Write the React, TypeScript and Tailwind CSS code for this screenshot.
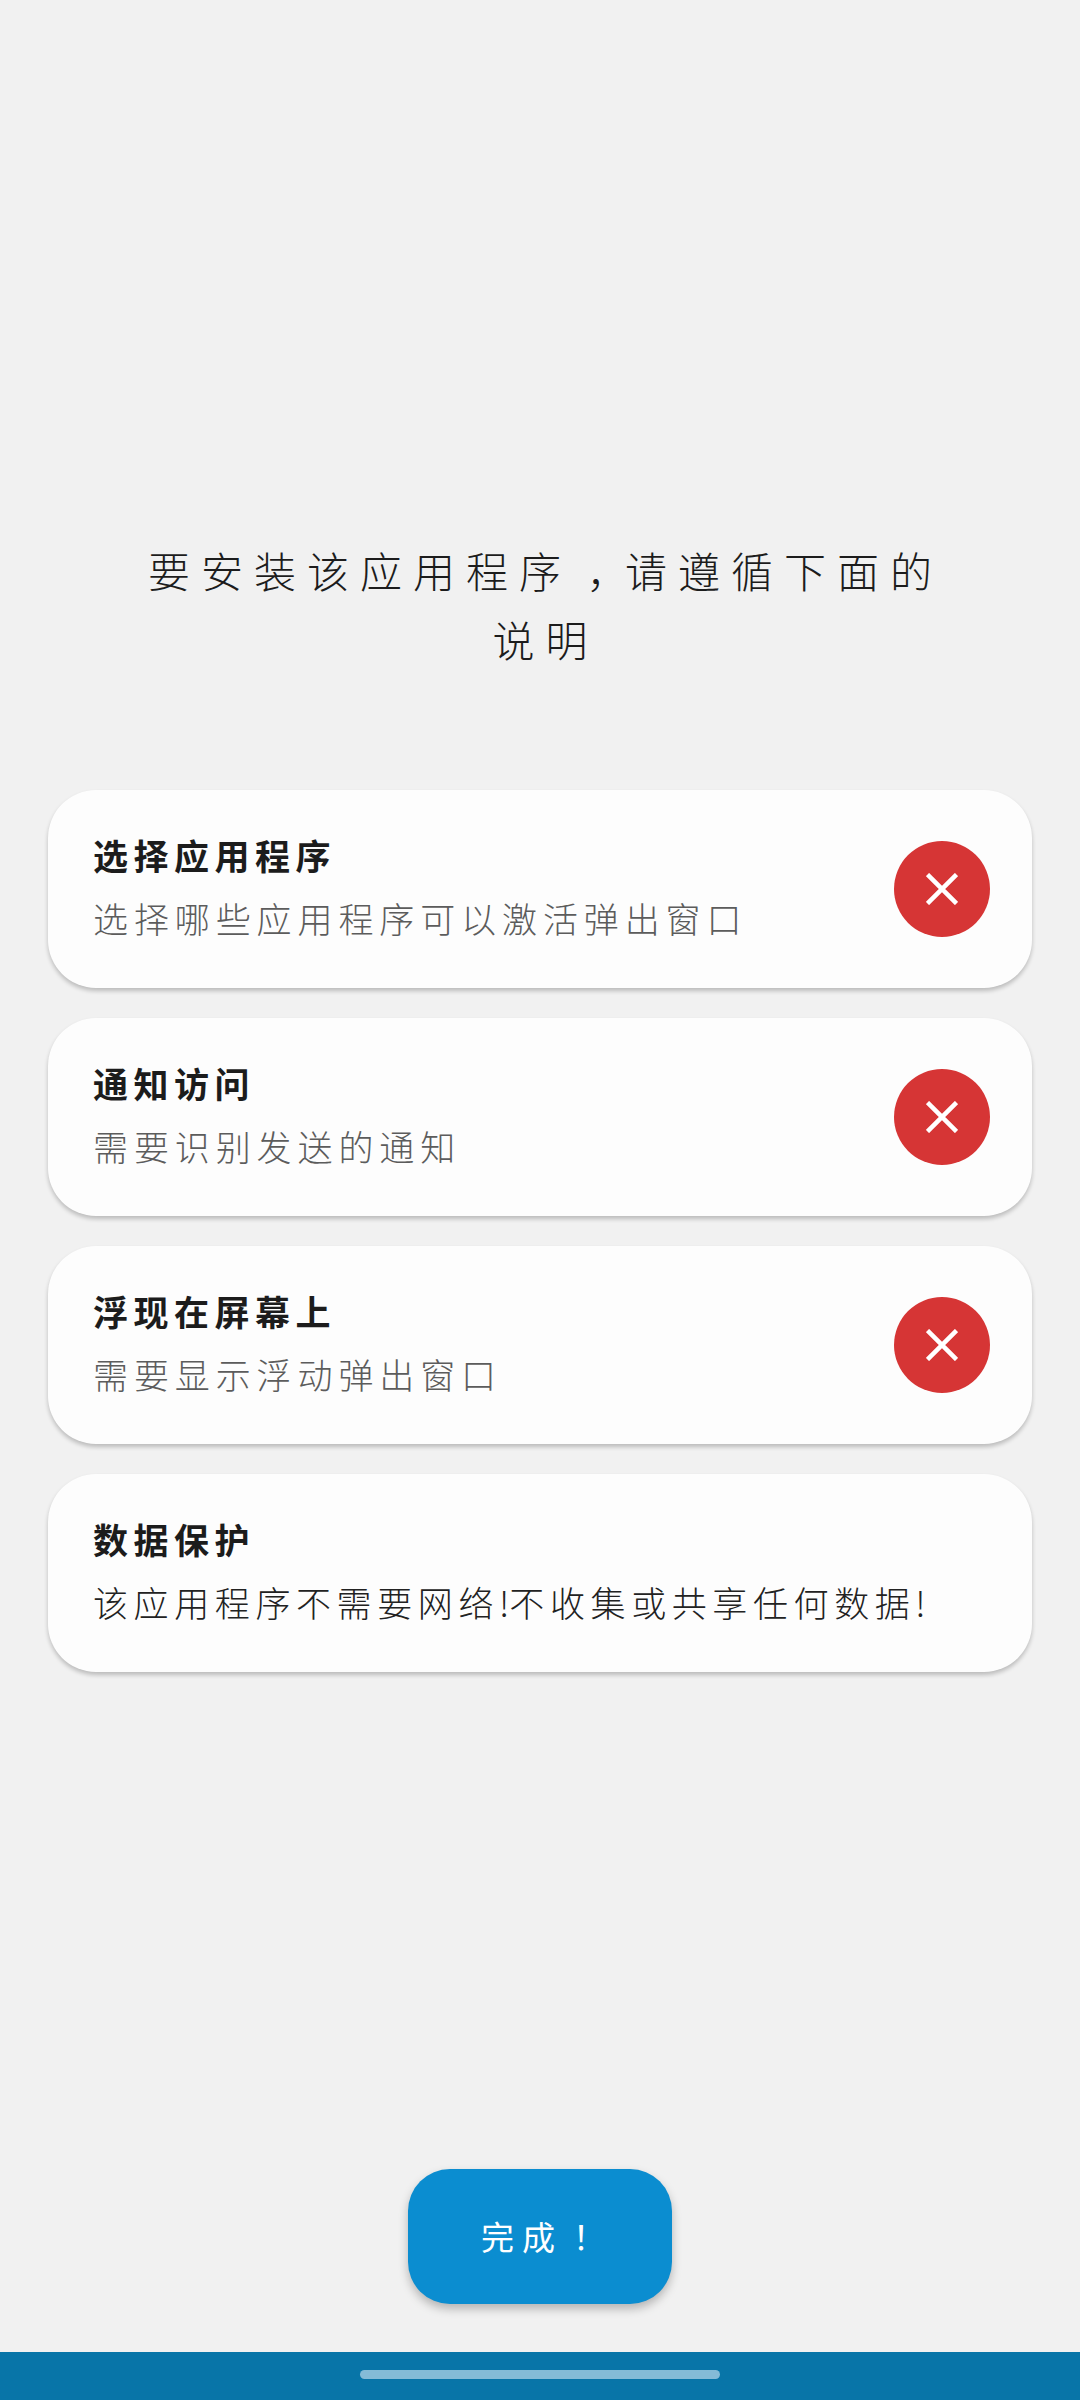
import type { ReactNode } from "react";

const font = { fontFamily: '"Noto Sans CJK SC", sans-serif' };

function Close() {
  return (
    <div className="flex h-[96px] w-[96px] shrink-0 items-center justify-center rounded-full bg-[#d63535]">
      <svg width="32" height="32" viewBox="0 0 32 32" fill="none" stroke="#ffffff" strokeWidth="4.5">
        <path d="M1.5 1.5L30.5 30.5M30.5 1.5L1.5 30.5" />
      </svg>
    </div>
  );
}

function Card({ title, sub, dark, close }: { title: string; sub: ReactNode; dark?: boolean; close?: boolean }) {
  return (
    <div className="flex h-[198px] items-center justify-between rounded-[48px] bg-[#fdfdfd] pl-[45px] pr-[42px] shadow-[0_3px_4px_rgba(0,0,0,0.22)]">
      <div className="flex flex-col gap-[21px] pb-[6px]">
        <div className="text-[35px] leading-[42px] font-bold tracking-[5.5px] text-[#1c1c1c]">{title}</div>
        <div className={dark ? "text-[35px] leading-[42px] font-light tracking-[5.6px] text-[#222222] whitespace-nowrap" : "text-[35px] leading-[42px] font-light tracking-[5.9px] text-[#5c5c5c] whitespace-nowrap"}>{sub}</div>
      </div>
      {close && <Close />}
    </div>
  );
}

export default function App() {
  return (
    <div style={font} className="flex h-[2400px] w-[1080px] flex-col bg-[#f1f1f1]">
      <div className="mx-auto mt-[535px] w-[820px] pl-[11px] text-center text-[42px] leading-[69px] font-light tracking-[11px] text-[#1c1c1c]">
        <div>
          要安装该应用程序<span className="inline-block w-[53px] pr-[3px] text-center tracking-[0px] [font-feature-settings:'halt']">，</span>请遵循下面的
        </div>
        <div>说明</div>
      </div>
      <div className="mx-[48px] mt-[117px] flex flex-col gap-[30px]">
        <Card title="选择应用程序" sub="选择哪些应用程序可以激活弹出窗口" close />
        <Card title="通知访问" sub="需要识别发送的通知" close />
        <Card title="浮现在屏幕上" sub="需要显示浮动弹出窗口" close />
        <Card
          title="数据保护"
          sub={
            <>
              该应用程序不需要网络<span className="tracking-[0px]">!</span>不收集或共享任何数据<span className="tracking-[0px]">!</span>
            </>
          }
          dark
        />
      </div>
      <div className="mt-auto mb-[48px] flex justify-center">
        <div className="flex h-[135px] w-[264px] items-center justify-center rounded-[42px] bg-[#0b8dd0] text-[33px] tracking-[8px] text-white shadow-[0_5px_10px_rgba(0,0,0,0.25)]">
          <span>完成</span>
          <span className="w-[36px] text-center tracking-[0px] [font-feature-settings:'halt']">！</span>
        </div>
      </div>
      <div className="flex h-[48px] justify-center bg-[#0875a8] pt-[18px]">
        <div className="h-[9px] w-[360px] rounded-full bg-[#84bbd7]" />
      </div>
    </div>
  );
}
